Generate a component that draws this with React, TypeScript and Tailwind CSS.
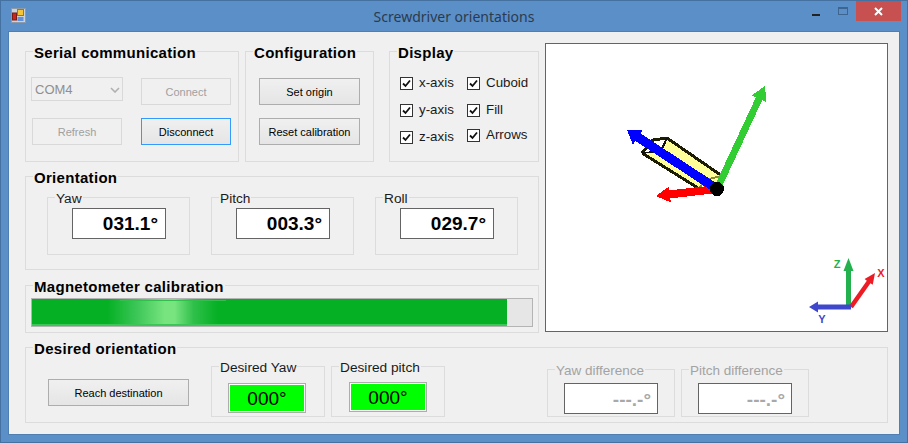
import React from "react";

const sans = "font-['Liberation_Sans',Arial,sans-serif]";

function Group({ title, className = "", titleClass = "", children }: { title: string; className?: string; titleClass?: string; children?: React.ReactNode }) {
  return (
    <div className={`relative shrink-0 border border-[#dcdcdc] ${className}`}>
      <span className={`absolute whitespace-nowrap bg-[#f0f0f0] px-[1px] leading-none ${titleClass}`}>{title}</span>
      {children}
    </div>
  );
}
const big = "left-[7px] top-[-7px] text-[15px] font-bold tracking-[0.3px] text-black";
const small = "left-[7px] top-[-6px] text-[13.7px] text-[#1a1a1a]";
const smallOff = "left-[7px] top-[-6px] text-[13.5px] text-[#a3a3a3]";

function Btn({ label, className = "", disabled = false, focus = false }: { label: string; className?: string; disabled?: boolean; focus?: boolean }) {
  const look = disabled
    ? "border-[#d9d9d9] text-[#a0a0a0]"
    : focus
    ? "border-[#3399ff] bg-gradient-to-b from-[#f0f0f0] to-[#e5e5e5] text-black"
    : "border-[#adadad] bg-gradient-to-b from-[#f0f0f0] to-[#e5e5e5] text-black";
  return <div className={`flex h-[27px] items-center justify-center border pt-[1px] text-[11px] ${look} ${className}`}>{label}</div>;
}

function Check({ label, className = "" }: { label: string; className?: string }) {
  return (
    <div className={`flex h-[13px] items-center ${className}`}>
      <div className="flex h-[13px] w-[13px] shrink-0 items-center justify-center border border-[#333] bg-white">
        <svg width="9" height="9" viewBox="0 0 9 9">
          <path d="M1 4.5 L3.5 7 L8 1.5" fill="none" stroke="#111" strokeWidth="1.8" />
        </svg>
      </div>
      <span className="mb-[2px] ml-[6px] whitespace-nowrap text-[13.33px] leading-none text-[#1a1a1a]">{label}</span>
    </div>
  );
}

function Readout({ value }: { value: string }) {
  return (
    <div className="ml-[24px] mt-[10px] flex h-[31px] w-[94px] items-center justify-end border border-[#646464] bg-white pr-[7px] text-[19px] font-bold leading-none text-black">
      {value}
    </div>
  );
}

function GreenBox({ className = "" }: { className?: string }) {
  return (
    <div className={`h-[30px] w-[78px] border border-[#adadad] bg-white p-[1px] ${className}`}>
      <div className="flex h-full items-center justify-center bg-[#00ff00] text-[19px] leading-none text-black">000°</div>
    </div>
  );
}

function OffBox() {
  return (
    <div className="ml-[16px] mt-[13px] flex h-[31px] w-[94px] items-center justify-end border border-[#646464] bg-white pr-[6px] pt-[2px] text-[19px] font-bold leading-none text-[#a8a8a8]">
      ---.-°
    </div>
  );
}

function Arrow({ x1, y1, x2, y2, w, hl, hw, fill, crisp = true }: { x1: number; y1: number; x2: number; y2: number; w: number; hl: number; hw: number; fill: string; crisp?: boolean }) {
  const dx = x2 - x1;
  const dy = y2 - y1;
  const l = Math.hypot(dx, dy);
  const ux = dx / l;
  const uy = dy / l;
  const nx = -uy;
  const ny = ux;
  const bx = x2 - ux * hl;
  const by = y2 - uy * hl;
  const p = [
    [x1 + (nx * w) / 2, y1 + (ny * w) / 2],
    [bx + (nx * w) / 2, by + (ny * w) / 2],
    [bx + nx * hw, by + ny * hw],
    [x2, y2],
    [bx - nx * hw, by - ny * hw],
    [bx - (nx * w) / 2, by - (ny * w) / 2],
    [x1 - (nx * w) / 2, y1 - (ny * w) / 2],
  ]
    .map((q) => q.join(","))
    .join(" ");
  return <polygon points={p} fill={fill} shapeRendering={crisp ? "crispEdges" : "auto"} />;
}

function Scene() {
  return (
    <svg viewBox="546 44 341 287" className="block h-full w-full">
      <g shapeRendering="crispEdges">
        <polygon points="667,138 722,176 716,186 700,188 642,153 662,151" fill="#ffff99" />
        <polyline points="642,153 653,140 667,138 722,176" fill="none" stroke="#1c1c00" strokeWidth="3" />
        <polyline points="642,153 698,188" fill="none" stroke="#1c1c00" strokeWidth="3" />
        <line x1="667" y1="138" x2="660" y2="153" stroke="#111" strokeWidth="2" />
        <line x1="642" y1="153" x2="660" y2="151" stroke="#111" strokeWidth="1.5" />
        <polyline points="700,187 705,180 721,176" fill="none" stroke="#8a8a30" strokeWidth="2" />
      </g>
      <Arrow x1={717} y1={189} x2={765} y2={86} w={7} hl={14} hw={8} fill="#32cd32" />
      <Arrow x1={717} y1={189} x2={656} y2={196} w={8} hl={14} hw={8} fill="#ff0000" />
      <Arrow x1={717} y1={189} x2={627} y2={130} w={9} hl={13} hw={9} fill="#0000ff" />
      <circle cx="717" cy="189" r="7" fill="#000" shapeRendering="crispEdges" />

      <Arrow x1={848.5} y1={307} x2={848.5} y2={258} w={5} hl={13} hw={5} fill="#22b14c" crisp={false} />
      <Arrow x1={851} y1={307} x2={875} y2={273} w={4.5} hl={11} hw={5} fill="#ed1c24" crisp={false} />
      <Arrow x1={851} y1={307} x2={809} y2={307} w={5} hl={9} hw={5.5} fill="#3f48cc" crisp={false} />
      <text x="837" y="268" textAnchor="middle" fontSize="11" fontWeight="700" fill="#22b14c" fontFamily="Liberation Sans">Z</text>
      <text x="881" y="277" textAnchor="middle" fontSize="11" fontWeight="700" fill="#ed1c24" fontFamily="Liberation Sans">X</text>
      <text x="822" y="323" textAnchor="middle" fontSize="11" fontWeight="700" fill="#3f48cc" fontFamily="Liberation Sans">Y</text>
    </svg>
  );
}

export default function App() {
  return (
    <div className={`flex h-[443px] w-[908px] flex-col overflow-hidden border border-[#44719f] bg-[#5b8fc8] ${sans}`}>
      <div className="grid h-[30px] shrink-0 grid-cols-[1fr_auto_1fr] items-start">
        <div className="pl-[10px] pt-[7px]">
          <svg width="15" height="15" viewBox="0 0 15 15" className="block">
            <rect x="0.5" y="0.5" width="14" height="14" fill="#c9d3dd" stroke="#8e9aa6" />
            <rect x="6.5" y="1.5" width="6" height="6" fill="#f6c63a" stroke="#9a7a20" />
            <rect x="1.5" y="5" width="4" height="7" fill="#c8261c" stroke="#7d1a14" />
            <rect x="6.5" y="9" width="6" height="4" fill="#5f92d8" />
          </svg>
        </div>
        <div className="pt-[6px] font-['Noto_Sans',sans-serif] text-[14px] leading-[19px] text-[#2b3b4e]">Screwdriver orientations</div>
        <div className="flex justify-end pr-[6px]">
          <div className="mr-[18px] mt-[13px] h-[2px] w-[8px] bg-[#222]" />
          <div className="mr-[8px] mt-[6px] h-[8px] w-[10px] border border-t-[2px] border-[#3e6590]" />
          <div className="flex h-[20px] w-[45px] items-center justify-center bg-[#c75050]">
            <svg width="9" height="9" viewBox="0 0 9 9">
              <path d="M1 1 L8 8 M8 1 L1 8" stroke="#fff" strokeWidth="2" />
            </svg>
          </div>
        </div>
      </div>

      <div className="mx-[7px] mb-[7px] flex-1 border border-[#4f7eb0] bg-[#f0f0f0] pl-[16px] pr-[11px] pt-[11px]">
        <div className="flex">
          <div className="flex w-[514px] shrink-0 flex-col pt-[8px]">
            <div className="flex h-[111px]">
              <Group title="Serial communication" titleClass={big} className="flex w-[214px]">
                <div className="ml-[5px] mt-[25px] flex w-[110px] shrink-0 flex-col">
                  <div className="flex h-[24px] w-[92px] items-center justify-between border border-[#d9d9d9] pl-[3px] pr-[2px] pt-[1px] text-[13px] text-[#8f8f8f]">
                    COM4
                    <svg width="10" height="6" viewBox="0 0 10 6"><path d="M1 1 L5 5 L9 1" fill="none" stroke="#b0b0b0" strokeWidth="1.6" /></svg>
                  </div>
                  <Btn label="Refresh" disabled className="ml-[1px] mt-[17px] w-[90px]" />
                </div>
                <div className="mt-[26px] flex flex-col gap-[13px]">
                  <Btn label="Connect" disabled className="w-[90px]" />
                  <Btn label="Disconnect" focus className="w-[90px]" />
                </div>
              </Group>
              <Group title="Configuration" titleClass={big} className="ml-[6px] flex w-[129px] flex-col gap-[13px] pl-[13px] pt-[26px]">
                <Btn label="Set origin" className="w-[101px]" />
                <Btn label="Reset calibration" className="w-[101px]" />
              </Group>
              <Group title="Display" titleClass={big} className="ml-[15px] flex w-[150px] pl-[10px] pt-[25px]">
                <div className="flex w-[67px] flex-col gap-[14px]">
                  <Check label="x-axis" />
                  <Check label="y-axis" />
                  <Check label="z-axis" />
                </div>
                <div className="flex flex-col">
                  <Check label="Cuboid" />
                  <Check label="Fill" className="mt-[14px]" />
                  <Check label="Arrows" className="mt-[12px]" />
                </div>
              </Group>
            </div>

            <Group title="Orientation" titleClass={big} className="mt-[14px] flex h-[94px] gap-[21px] pl-[21px] pt-[20px]">
              <Group title="Yaw" titleClass={small} className="h-[58px] w-[143px]"><Readout value="031.1°" /></Group>
              <Group title="Pitch" titleClass={small} className="h-[58px] w-[143px]"><Readout value="003.3°" /></Group>
              <Group title="Roll" titleClass={small} className="h-[58px] w-[143px]"><Readout value="029.7°" /></Group>
            </Group>

            <Group title="Magnetometer calibration" titleClass={big} className="mt-[15px] h-[48px] pl-[5px] pt-[12px]">
              <div className="h-[29px] w-[502px] border border-[#b4b4b4] bg-[#e6e6e6]">
                <div className="relative h-full w-[475px] overflow-hidden bg-[linear-gradient(90deg,#06b025_16%,#3cc657_22%,#78e480_28%,#78e480_30%,#2fc04a_34%,#06b025_39%)]">
                  <div className="absolute left-[88px] top-[1px] h-[1px] w-[106px] bg-[#2fc04a]" />
                  <div className="absolute inset-x-0 bottom-0 h-[2px] bg-[#3cc657]" />
                </div>
              </div>
            </Group>
          </div>

          <div className="ml-[6px] h-[289px] w-[343px] shrink-0 border border-[#646464] bg-white">
            <Scene />
          </div>
        </div>

        <Group title="Desired orientation" titleClass={big} className="mt-[14px] flex h-[76px] w-[863px] items-start">
          <Btn label="Reach destination" className="ml-[22px] mt-[31px] w-[141px] shrink-0" />
          <Group title="Desired Yaw" titleClass={small} className="ml-[22px] mt-[18px] h-[51px] w-[114px] pl-[16px] pt-[16px]"><GreenBox /></Group>
          <Group title="Desired pitch" titleClass={small} className="ml-[6px] mt-[18px] h-[51px] w-[114px] pl-[17px] pt-[15px]"><GreenBox /></Group>
          <Group title="Yaw difference" titleClass={smallOff} className="ml-[102px] mt-[21px] h-[48px] w-[128px]"><OffBox /></Group>
          <Group title="Pitch difference" titleClass={smallOff} className="ml-[6px] mt-[21px] h-[48px] w-[128px]"><OffBox /></Group>
        </Group>
      </div>
    </div>
  );
}
